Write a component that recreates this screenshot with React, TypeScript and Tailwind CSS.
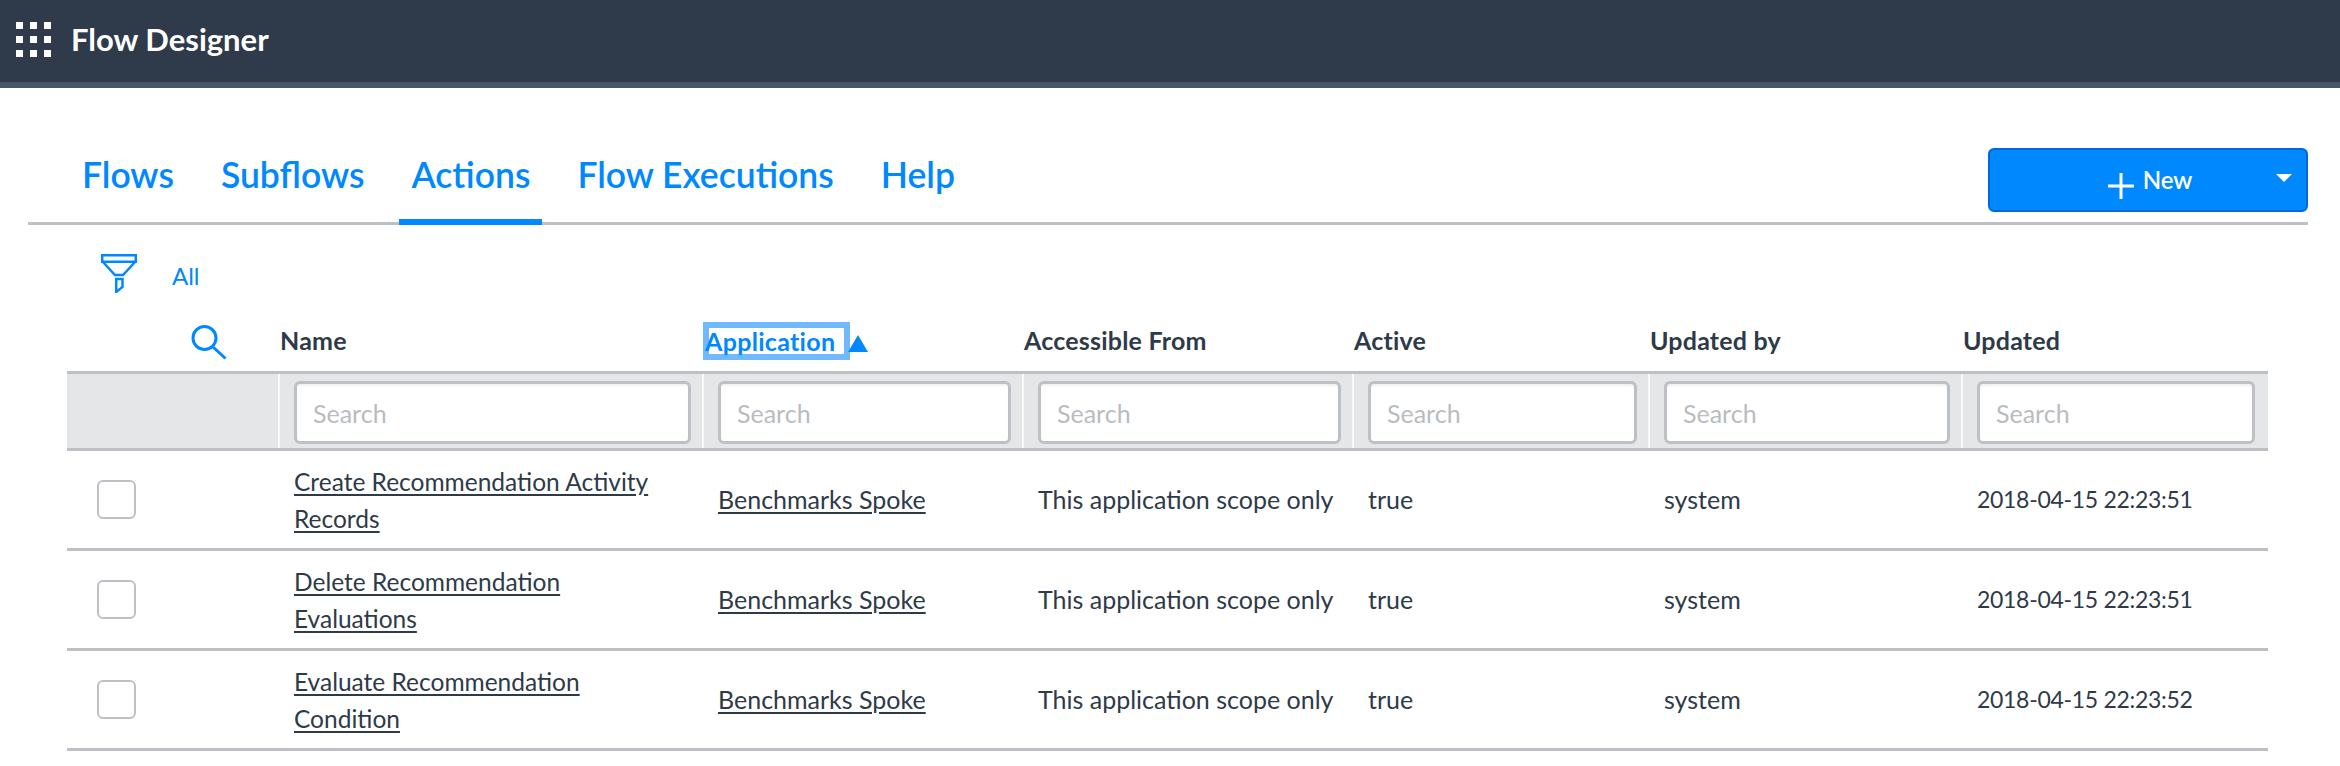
import React from 'react';

const gridCols = 'grid grid-cols-[213px_424px_320px_330px_296px_313px_305px]';

const rows = [
  { name: 'Create Recommendation Activity Records', updated: '2018-04-15 22:23:51' },
  { name: 'Delete Recommendation Evaluations', updated: '2018-04-15 22:23:51' },
  { name: 'Evaluate Recommendation Condition', updated: '2018-04-15 22:23:52' },
];

const tabs = ['Flows', 'Subflows', 'Actions', 'Flow Executions', 'Help'];
const plainHeaders = ['Accessible From', 'Active', 'Updated by', 'Updated'];

const FilterIcon = () => (
  <svg width="36" height="39" viewBox="0 0 36 39" fill="none" stroke="#0088ff" strokeWidth="2.5" className="mb-[5px]">
    <path d="M1.2 1.2h33.6v6.5H1.2z" />
    <path d="M1.5 7.5 L14 21 H22 L34.5 7.5" />
    <path d="M15.2 25 H21.5 V33 L15.2 38z" />
  </svg>
);

const SearchIcon = () => (
  <svg width="36" height="36" viewBox="0 0 36 36" fill="none" stroke="#0088ff" strokeWidth="3">
    <circle cx="13.5" cy="13" r="11.5" />
    <path d="M21.5 21.5 L34.5 33.5" />
  </svg>
);

export default function App() {
  return (
    <div className="w-[2340px] h-[766px] overflow-hidden bg-white font-['Lato','Liberation_Sans',sans-serif] text-[#2e3a48]">
      <header className="h-[88px] bg-[#2f3b4a] border-b-[6px] border-[#455567] flex items-center pl-4">
        <div className="grid grid-cols-3 gap-[7px] w-[35px] mb-[4px]">
          {Array.from({ length: 9 }).map((_, i) => (
            <div key={i} className="w-[7px] h-[7px] bg-white" />
          ))}
        </div>
        <span className="ml-[20px] mb-[4px] text-[31px] font-bold text-white">Flow Designer</span>
      </header>

      <div className="ml-[28px] mr-[32px] h-[137px] border-b-[3px] border-[#bdc0c4] flex items-end justify-between">
        <nav className="flex gap-[23px] pl-[42px] -mb-[3px]">
          {tabs.map((t) => (
            <div
              key={t}
              className={
                t === 'Actions'
                  ? 'px-3 pt-[2px] h-[72px] leading-[40px] text-[35.5px] font-semibold text-[#0088ff] border-b-[6px] border-[#0088ff]'
                  : 'px-3 pt-[2px] h-[72px] leading-[40px] text-[35.5px] font-semibold text-[#0088ff]'
              }
            >
              {t}
            </div>
          ))}
        </nav>
        <button className="relative w-[320px] h-[64px] mb-[10px] pl-[8px] bg-[#0088ff] border-2 border-[#0067d9] rounded-[6px] flex items-center justify-center gap-[9px] text-white text-[24px] font-semibold">
          <svg width="26" height="26" viewBox="0 0 26 26" className="mt-[12px]" stroke="#fff" strokeWidth="3">
            <path d="M13 0v26M0 13h26" />
          </svg>
          <span className="mr-[4px]">New</span>
          <span className="absolute right-[14px] top-[24px] w-0 h-0 border-x-[8px] border-x-transparent border-t-[8px] border-t-white" />
        </button>
      </div>

      <div className="flex items-center h-[50px] mt-[26px] pl-[101px]">
        <FilterIcon />
        <span className="ml-[35px] text-[24px] text-[#0088ff]">All</span>
      </div>

      <div className="ml-[67px] w-[2201px]">
        <div className={`${gridCols} h-[70px] pt-[10px] items-center text-[25px] font-bold tracking-[0.2px]`}>
          <div className="pl-[124px] pt-[4px]">
            <SearchIcon />
          </div>
          <div>Name</div>
          <div className="flex items-center">
            <span className="-ml-px w-[147px] h-[38px] leading-[26px] border-[6px] border-[#70b9ff] text-[#0088ff] tracking-[0.3px] whitespace-nowrap">
              <span className="-ml-[4px]">Application</span>
            </span>
            <span className="-ml-[2px] mt-[5px] w-0 h-0 border-x-[10px] border-x-transparent border-b-[17px] border-b-[#0088ff]" />
          </div>
          {plainHeaders.map((h) => (
            <div key={h}>{h}</div>
          ))}
        </div>

        <div className={`${gridCols} h-[80px] bg-[#e5e6e8] border-y-[3px] border-[#bdc0c4]`}>
          <div className="border-r-2 border-white/80" />
          {[0, 1, 2, 3, 4, 5].map((i) => (
            <div key={i} className={i < 5 ? 'pl-[14px] pr-[11px] pt-[7px] border-r-2 border-white/80' : 'pl-[14px] pr-[13px] pt-[7px]'}>
              <input
                placeholder="Search"
                readOnly
                className="w-full h-[63px] bg-white border-[3px] border-[#bdc0c4] rounded-[6px] px-[16px] text-[25px] outline-none placeholder:text-[#b9bcc0] shadow-[inset_0_2px_2px_rgba(0,0,0,0.06)]"
              />
            </div>
          ))}
        </div>

        {rows.map((r) => (
          <div key={r.name} className={`${gridCols} h-[100px] items-center border-b-[3px] border-[#bdc0c4] text-[25px] leading-[37px]`}>
            <div className="pl-[30px]">
              <div className="w-[39px] h-[39px] rounded-[6px] border-[2px] border-[#bdc0c4] bg-white" />
            </div>
            <div className="pl-[14px] pr-[30px] text-[24.5px]"><span className="underline underline-offset-[3px]">{r.name}</span></div>
            <div className="pl-[14px]"><span className="underline underline-offset-[3px]">Benchmarks Spoke</span></div>
            <div className="pl-[14px]">This application scope only</div>
            <div className="pl-[14px]">true</div>
            <div className="pl-[14px]">system</div>
            <div className="pl-[14px] text-[23px] tracking-[-0.3px]">{r.updated}</div>
          </div>
        ))}
      </div>
    </div>
  );
}
